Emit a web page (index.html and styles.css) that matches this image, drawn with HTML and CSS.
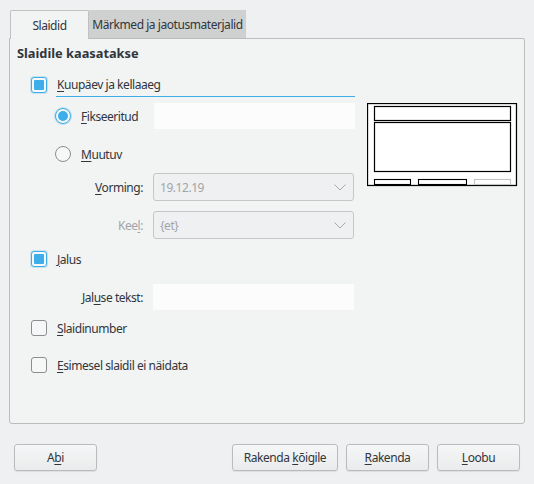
FILE: index.html
```html
<!DOCTYPE html>
<html>
<head>
<meta charset="utf-8">
<link rel="stylesheet" href="styles.css">
</head>
<body>
<div class="window">
  <div class="tabs">
    <div class="tab active">Slaidid</div>
    <div class="tab">Märkmed ja jaotusmaterjalid</div>
  </div>
  <div class="panel">
    <div class="title">Slaidile kaasatakse</div>
    <div class="content">
      <div class="left">
        <div class="row row-a">
          <span class="check checked"></span>
          <span class="focus-label"><u>K</u>uupäev ja kellaaeg</span>
        </div>
        <div class="row row-b indent">
          <span class="radio checked"></span>
          <span class="rlabel"><u>F</u>ikseeritud</span>
          <span class="input"></span>
        </div>
        <div class="row row-c indent">
          <span class="radio"></span>
          <span class="rlabel"><u>M</u>uutuv</span>
        </div>
        <div class="row row-d indent">
          <span class="flabel"><u>V</u>orming:</span>
          <span class="combo"><span>19.12.19</span><svg class="chev" width="12" height="7" viewBox="0 0 12 7"><path d="M0.5 0.5 L6 6 L11.5 0.5" fill="none" stroke="#a7aaad" stroke-width="1"/></svg></span>
        </div>
        <div class="row row-e indent">
          <span class="flabel disabled">Kee<u>l</u>:</span>
          <span class="combo"><span>{et}</span><svg class="chev" width="12" height="7" viewBox="0 0 12 7"><path d="M0.5 0.5 L6 6 L11.5 0.5" fill="none" stroke="#a7aaad" stroke-width="1"/></svg></span>
        </div>
        <div class="row row-f">
          <span class="check checked"></span>
          <span class="clabel"><u>J</u>alus</span>
        </div>
        <div class="row row-g indent">
          <span class="flabel">Jal<u>u</u>se tekst:</span>
          <span class="input"></span>
        </div>
        <div class="row row-h">
          <span class="check"></span>
          <span class="clabel"><u>S</u>laidinumber</span>
        </div>
        <div class="row row-i">
          <span class="check"></span>
          <span class="clabel"><u>E</u>simesel slaidil ei näidata</span>
        </div>
      </div>
      <svg class="preview" width="151" height="84" viewBox="0 0 151 84">
        <rect x="0" y="0" width="151" height="84" fill="#ffffff"/>
        <rect x="0.5" y="0.5" width="149" height="82" fill="none" stroke="#000" stroke-width="1.3"/>
        <rect x="7.5" y="3.5" width="136" height="14" fill="none" stroke="#000" stroke-width="1.2"/>
        <rect x="7.5" y="19.5" width="136" height="49" fill="none" stroke="#000" stroke-width="1.2"/>
        <rect x="7.5" y="76.5" width="36" height="5" fill="none" stroke="#000" stroke-width="1.1"/>
        <rect x="51.5" y="76.5" width="48" height="5" fill="none" stroke="#000" stroke-width="1.1"/>
        <rect x="107.5" y="76.5" width="36" height="5" fill="none" stroke="#c4c4c4" stroke-width="1.1"/>
      </svg>
    </div>
  </div>
  <div class="buttons">
    <button class="btn">A<u>b</u>i</button>
    <span class="spacer"></span>
    <button class="btn wide">Rakenda <u>k</u>õigile</button>
    <button class="btn"><u>R</u>akenda</button>
    <button class="btn"><u>L</u>oobu</button>
  </div>
</div>
</body>
</html>
```

FILE: styles.css
```css
html, body {
  margin: 0;
  padding: 0;
}
body {
  width: 534px;
  height: 484px;
  background: #eff0f1;
  font-family: "Noto Sans", sans-serif;
  font-size: 12px;
  letter-spacing: -0.45px;
  color: #31363b;
  overflow: hidden;
}
u {
  text-decoration: underline;
  text-underline-offset: 2px;
}
.window {
  padding: 10px 9px 0 9px;
}
.tabs {
  display: flex;
  margin-left: 1px;
  height: 28px;
}
.tab {
  box-sizing: border-box;
  height: 28px;
  width: 157px;
  background: #cfd0d0;
  display: flex;
  align-items: center;
  justify-content: center;
  color: #31363b;
  white-space: nowrap;
}
.tab.active {
  width: 79px;
  height: 29px;
  background: #f2f3f3;
  border: 1px solid #bfc1c2;
  border-bottom: none;
  border-radius: 2px 2px 0 0;
  position: relative;
  z-index: 1;
  padding-top: 1px;
}
.panel {
  box-sizing: border-box;
  height: 386px;
  border: 1px solid #babcbd;
  border-radius: 0 2px 3px 3px;
  background: #f2f3f3;
}
.title {
  font-weight: bold;
  font-size: 12.8px;
  letter-spacing: 0;
  margin: 6px 0 0 7px;
  line-height: 16px;
  height: 16px;
}
.content {
  display: flex;
  margin-top: 11px;
  padding-left: 21px;
}
.left {
  width: 324px;
  display: flex;
  flex-direction: column;
}
.preview {
  display: block;
  margin: 31px 0 0 12px;
}
.row {
  display: flex;
  align-items: center;
  height: 24px;
  white-space: nowrap;
}
.indent {
  padding-left: 24px;
}
.row-a { height: 25px; }
.row-b { margin-top: 6px; height: 26px; }
.row-c { margin-top: 12px; height: 26px; }
.row-d { margin-top: 6px; height: 28px; }
.row-e { margin-top: 10px; height: 28px; }
.row-f { margin-top: 8px; }
.row-g { margin-top: 13px; height: 26px; }
.row-h { margin-top: 6px; }
.row-i { margin-top: 13px; }

.check {
  box-sizing: border-box;
  width: 16px;
  height: 16px;
  border: 1px solid #8b8e91;
  border-radius: 3px;
  background: #f6f7f7;
  flex: none;
  display: flex;
  align-items: center;
  justify-content: center;
}
.check.checked {
  border-color: #3daee9;
  box-shadow: 0 0 0 1px rgba(61, 174, 233, 0.25);
}
.check.checked::after {
  content: "";
  width: 10px;
  height: 10px;
  background: #3daee9;
  border-radius: 1px;
}
.clabel {
  margin-left: 10px;
}
.focus-label {
  margin-left: 9px;
  align-self: stretch;
  display: flex;
  align-items: center;
  width: 299px;
  box-sizing: border-box;
  padding-left: 1px;
  border-bottom: 1px solid #3daee9;
  padding-top: 1px;
}
.radio {
  box-sizing: border-box;
  width: 16px;
  height: 16px;
  border: 1px solid #8b8e91;
  border-radius: 50%;
  background: #f6f7f7;
  flex: none;
  display: flex;
  align-items: center;
  justify-content: center;
}
.radio.checked {
  border-color: #3daee9;
  box-shadow: 0 0 0 1px rgba(61, 174, 233, 0.3);
}
.radio.checked::after {
  content: "";
  width: 10px;
  height: 10px;
  border-radius: 50%;
  background: #3daee9;
}
.rlabel {
  margin-left: 10px;
  width: 73px;
}
.flabel {
  width: 88px;
  text-align: right;
  margin-right: 10px;
}
.flabel.disabled {
  color: #a2a5a8;
}
.input {
  display: block;
  width: 201px;
  align-self: stretch;
  background: #fcfcfc;
}
.combo {
  box-sizing: border-box;
  width: 201px;
  align-self: stretch;
  border: 1px solid #c4c6c7;
  border-radius: 3px;
  background: #eff0f1;
  display: flex;
  align-items: center;
  justify-content: space-between;
  padding: 0 7px 0 6px;
  color: #a2a5a8;
}
.chev {
  display: block;
}
.buttons {
  display: flex;
  margin-top: 20px;
  padding: 0 5px;
  gap: 8px;
}
.spacer {
  flex: 1;
}
.btn {
  box-sizing: border-box;
  width: 83px;
  height: 27px;
  border: 1px solid #b9bbbd;
  border-radius: 3px;
  background: linear-gradient(#f5f6f6, #eaebec);
  box-shadow: 0 1px 1px rgba(0, 0, 0, 0.08);
  font-family: "Noto Sans", sans-serif;
  font-size: 12px;
  letter-spacing: -0.45px;
  color: #31363b;
  padding: 0;
}
.btn.wide {
  width: 106px;
}
```
